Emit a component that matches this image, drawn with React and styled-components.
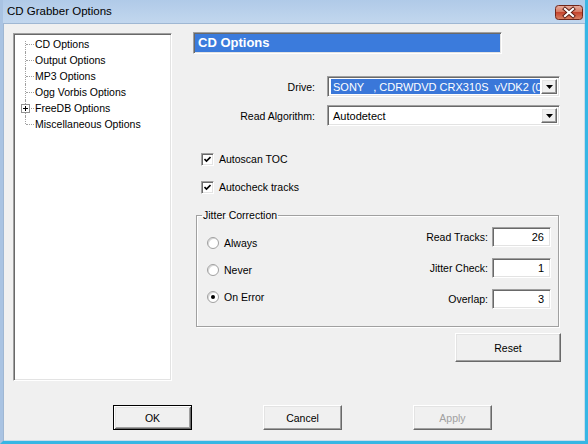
import styled, { createGlobalStyle, css } from 'styled-components'

const GlobalStyle = createGlobalStyle`
  html, body {
    margin: 0;
    padding: 0;
    overflow: hidden;
  }
  body {
    font-family: "Liberation Sans", Arial, sans-serif;
    font-size: 10.5px;
    color: #000;
  }
`

const sunken = css`
  box-sizing: border-box;
  border-style: solid;
  border-width: 1px;
  border-color: #a0a0a0 #ffffff #ffffff #a0a0a0;
  box-shadow: inset 1px 1px 0 #696969, inset -1px -1px 0 #e3e3e3;
`

const raised = css`
  box-sizing: border-box;
  border-style: solid;
  border-width: 1px;
  border-color: #ffffff #696969 #696969 #ffffff;
  box-shadow: inset -1px -1px 0 #a0a0a0, inset 1px 1px 0 #e3e3e3;
`

const Window = styled.div`
  box-sizing: border-box;
  width: 588px;
  height: 444px;
  display: flex;
  flex-direction: column;
  background: #b9d0ea;
  border-style: solid;
  border-width: 0 3px 3px 3px;
  border-color: #a9c3e2 #37b6e4 #37b6e4 #a9c3e2;
`

const TitleBar = styled.div`
  height: 23px;
  flex: none;
  display: flex;
  align-items: flex-start;
  justify-content: space-between;
  background: linear-gradient(#b0cae8, #c2d7ee);
  padding: 0 2px 0 4px;
`

const Title = styled.div`
  font-size: 11.5px;
  line-height: 23px;
  color: #000;
`

const CloseButton = styled.div`
  margin-top: 5px;
  width: 28px;
  height: 15px;
  svg { display: block; }
`

const Client = styled.div`
  flex: 1;
  display: flex;
  flex-direction: column;
  background: #f0f0f0;
  padding: 10px 10px 0 10px;
  box-shadow: inset 1px 1px 0 #9fb7d3, inset -1px -1px 0 #c9dcea;
`

const Body = styled.div`
  display: flex;
  align-items: flex-start;
  gap: 21px;
`

const Tree = styled.ul`
  ${sunken};
  width: 159px;
  height: 348px;
  margin: 0;
  padding: 2px;
  list-style: none;
  background: #fff;
`

const TreeItem = styled.li`
  height: 16px;
  display: flex;
  align-items: center;
  white-space: nowrap;
`

const Connector = styled.span`
  position: relative;
  width: 18px;
  height: 16px;
  flex: none;
  &::before {
    content: '';
    position: absolute;
    left: 9px;
    top: ${p => (p.$first ? '5px' : '0')};
    height: ${p => (p.$first ? '11px' : p.$last ? '8px' : '16px')};
    border-left: 1px dotted #a0a0a0;
  }
  &::after {
    content: '';
    position: absolute;
    left: 10px;
    top: 8px;
    width: 8px;
    border-top: 1px dotted #a0a0a0;
  }
`

const Expander = styled.svg`
  position: absolute;
  left: 5px;
  top: 4px;
  z-index: 1;
`

const ItemLabel = styled.span`
  padding-left: 1px;
  line-height: 16px;
`

const Panel = styled.div`
  width: 368px;
  display: flex;
  flex-direction: column;
`

const Header = styled.div`
  ${sunken};
  width: 309px;
  height: 22px;
  margin-top: -1px;
  background: #3b7bdc;
  color: #fff;
  font-weight: bold;
  font-size: 13px;
  line-height: 20px;
  padding-left: 4px;
`

const FormRow = styled.div`
  display: grid;
  grid-template-columns: 122px 233px;
  column-gap: 12px;
  align-items: center;
  margin-top: ${p => p.$top}px;
`

const RowLabel = styled.span`
  text-align: right;
`

const Combo = styled.div`
  ${sunken};
  height: 21px;
  background: #fff;
  display: flex;
  align-items: stretch;
  padding: 2px;
`

const ComboValue = styled.div`
  flex: 1;
  overflow: hidden;
  white-space: pre;
  line-height: 15px;
  font-size: 11px;
  padding: 1px 1px 0 ${p => (p.$selected ? '2px' : '3px')};
  margin: ${p => (p.$selected ? '0 1px' : '0')};
  background: ${p => (p.$selected ? '#3a77d9' : 'transparent')};
  color: ${p => (p.$selected ? '#fff' : '#000')};
`

const DropButton = styled.div`
  ${raised};
  width: 16px;
  flex: none;
  display: flex;
  align-items: center;
  justify-content: center;
  background: #f0f0f0;
`

const CheckRow = styled.label`
  display: flex;
  align-items: center;
  gap: 5px;
  height: 16px;
  margin-left: 8px;
  margin-top: ${p => p.$top}px;
`

const CheckBox = styled.span`
  ${sunken};
  width: 13px;
  height: 13px;
  background: #fff;
  display: flex;
  align-items: center;
  justify-content: center;
`

const Group = styled.fieldset`
  margin: 14px 0 0 3px;
  padding: 0;
  width: 363px;
  box-sizing: border-box;
  border: 1px solid #a0a0a0;
  box-shadow: inset 1px 1px 0 #fff, 1px 1px 0 #fff;
  min-inline-size: 0;
`

const Legend = styled.legend`
  margin-left: 5px;
  padding: 0 1px;
  line-height: 13px;
`

const GroupBody = styled.div`
  display: flex;
  justify-content: space-between;
  padding: 0 7px 0 10px;
`

const Column = styled.div`
  display: flex;
  flex-direction: column;
  align-items: ${p => (p.$right ? 'flex-end' : 'flex-start')};
  gap: ${p => p.$gap}px;
  padding-top: ${p => p.$top}px;
  padding-bottom: ${p => p.$bottom || 0}px;
`

const RadioRow = styled.label`
  display: flex;
  align-items: center;
  gap: 5px;
  height: 16px;
`

const Radio = styled.span`
  box-sizing: border-box;
  width: 12px;
  height: 12px;
  border-radius: 50%;
  background: #fff;
  border: 1px solid #a0a0a0;
  box-shadow: inset 1px 1px 0 #d8d8d8;
  display: flex;
  align-items: center;
  justify-content: center;
  &::after {
    content: '';
    width: 4px;
    height: 4px;
    border-radius: 50%;
    background: ${p => (p.$checked ? '#000' : 'transparent')};
  }
`

const FieldRow = styled.div`
  display: flex;
  align-items: center;
  gap: 4px;
`

const NumberBox = styled.div`
  ${sunken};
  width: 59px;
  height: 20px;
  background: #fff;
  text-align: right;
  padding-right: 6px;
  line-height: 18px;
  font-size: 11px;
`

const Button = styled.div`
  ${raised};
  width: ${p => p.$width}px;
  height: ${p => p.$height}px;
  background: #f0f0f0;
  display: flex;
  align-items: center;
  justify-content: center;
  color: ${p => (p.$disabled ? '#a0a0a0' : '#000')};
  ${p =>
    p.$default &&
    css`
      border: 1px solid #000;
      box-shadow: inset 1px 1px 0 #fff, inset -1px -1px 0 #696969,
        inset 2px 2px 0 #e3e3e3, inset -2px -2px 0 #a0a0a0;
    `}
`

const ResetButton = styled(Button)`
  align-self: flex-end;
  margin-top: 6px;
`

const Buttons = styled.div`
  display: flex;
  gap: 71px;
  margin: 24px 0 0 100px;
`

function CloseIcon() {
  return (
    <svg width="28" height="15" viewBox="0 0 28 15">
      <defs>
        <linearGradient id="closeGrad" x1="0" y1="0" x2="0" y2="1">
          <stop offset="0" stopColor="#e9b0a2" />
          <stop offset="0.45" stopColor="#d77a62" />
          <stop offset="0.5" stopColor="#c6452e" />
          <stop offset="1" stopColor="#d98466" />
        </linearGradient>
      </defs>
      <rect x="0.5" y="0.5" width="27" height="14" rx="3" fill="url(#closeGrad)" stroke="#70261a" />
      <path d="M10 4 L18 11 M18 4 L10 11" stroke="#5a1a10" strokeWidth="4" strokeLinecap="square" />
      <path d="M10 4 L18 11 M18 4 L10 11" stroke="#fff" strokeWidth="2.2" strokeLinecap="square" />
    </svg>
  )
}

function PlusBox() {
  return (
    <Expander width="9" height="9" viewBox="0 0 9 9">
      <rect x="0.5" y="0.5" width="8" height="8" fill="#fff" stroke="#919191" />
      <path d="M2 4.5 H7 M4.5 2 V7" stroke="#000" strokeWidth="1" />
    </Expander>
  )
}

function Arrow() {
  return (
    <svg width="7" height="4" viewBox="0 0 7 4">
      <polygon points="0,0 7,0 3.5,4" fill="#000" />
    </svg>
  )
}

function Check() {
  return (
    <svg width="7" height="7" viewBox="0 0 7 7">
      <path d="M0.5 3 L2.5 5 L6.5 1" fill="none" stroke="#000" strokeWidth="1.6" />
    </svg>
  )
}

const pages = [
  'CD Options',
  'Output Options',
  'MP3 Options',
  'Ogg Vorbis Options',
  'FreeDB Options',
  'Miscellaneous Options',
]

const numbers = [
  ['Read Tracks:', '26'],
  ['Jitter Check:', '1'],
  ['Overlap:', '3'],
]

export default function App() {
  return (
    <>
      <GlobalStyle />
      <Window>
        <TitleBar>
          <Title>CD Grabber Options</Title>
          <CloseButton>
            <CloseIcon />
          </CloseButton>
        </TitleBar>
        <Client>
          <Body>
            <Tree>
              {pages.map((name, i) => (
                <TreeItem key={name}>
                  <Connector $first={i === 0} $last={i === pages.length - 1}>
                    {name === 'FreeDB Options' && <PlusBox />}
                  </Connector>
                  <ItemLabel>{name}</ItemLabel>
                </TreeItem>
              ))}
            </Tree>
            <Panel>
              <Header>CD Options</Header>
              <FormRow $top={22}>
                <RowLabel>Drive:</RowLabel>
                <Combo>
                  <ComboValue $selected>{'SONY   , CDRWDVD CRX310S  vVDK2 (0:1:0)'}</ComboValue>
                  <DropButton>
                    <Arrow />
                  </DropButton>
                </Combo>
              </FormRow>
              <FormRow $top={8}>
                <RowLabel>Read Algorithm:</RowLabel>
                <Combo>
                  <ComboValue>Autodetect</ComboValue>
                  <DropButton>
                    <Arrow />
                  </DropButton>
                </Combo>
              </FormRow>
              <CheckRow $top={25}>
                <CheckBox>
                  <Check />
                </CheckBox>
                Autoscan TOC
              </CheckRow>
              <CheckRow $top={12}>
                <CheckBox>
                  <Check />
                </CheckBox>
                Autocheck tracks
              </CheckRow>
              <Group>
                <Legend>Jitter Correction</Legend>
                <GroupBody>
                  <Column $gap={11} $top={13}>
                    <RadioRow>
                      <Radio />
                      Always
                    </RadioRow>
                    <RadioRow>
                      <Radio />
                      Never
                    </RadioRow>
                    <RadioRow>
                      <Radio $checked />
                      On Error
                    </RadioRow>
                  </Column>
                  <Column $right $gap={11} $top={5} $bottom={17}>
                    {numbers.map(([label, value]) => (
                      <FieldRow key={label}>
                        <span>{label}</span>
                        <NumberBox>{value}</NumberBox>
                      </FieldRow>
                    ))}
                  </Column>
                </GroupBody>
              </Group>
              <ResetButton $width={106} $height={29}>Reset</ResetButton>
            </Panel>
          </Body>
          <Buttons>
            <Button $default $width={79} $height={25}>OK</Button>
            <Button $width={79} $height={25}>Cancel</Button>
            <Button $disabled $width={79} $height={25}>Apply</Button>
          </Buttons>
        </Client>
      </Window>
    </>
  )
}
